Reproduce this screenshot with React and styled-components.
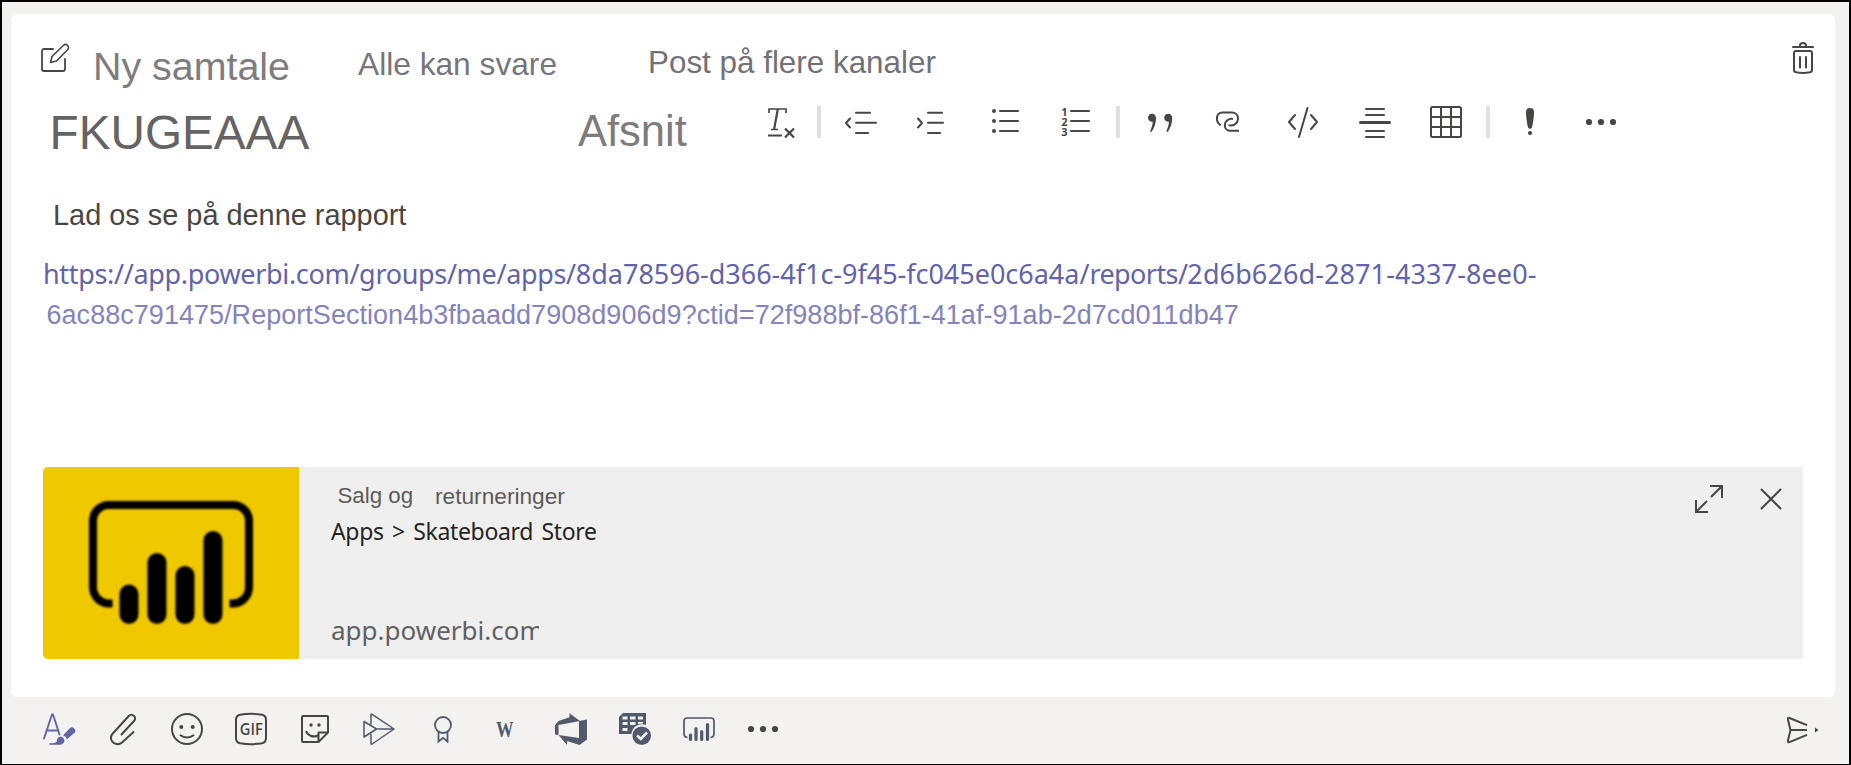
import React from "react";
import styled, { createGlobalStyle } from "styled-components";

const Global = createGlobalStyle`
  * { box-sizing: border-box; }
  body { margin: 0; background: #f3f2f1; font-family: "Liberation Sans", Arial, sans-serif; }
`;

const Frame = styled.div`
  width: 1851px;
  height: 765px;
  border: 2px solid #000;
  border-bottom-width: 1px;
  background: #f3f2f1;
  padding: 12px 14px 0 9px;
  overflow: hidden;
`;

const Composer = styled.section`
  height: 683px;
  background: #fff;
  border-radius: 6px;
  padding: 0 32px;
`;

const Row = styled.div`
  display: flex;
  align-items: flex-start;
  height: ${(p) => p.$height}px;
`;

const Label = styled.span`
  flex: none;
  white-space: pre;
  font-weight: 400;
  font-size: ${(p) => p.$size}px;
  line-height: ${(p) => p.$line}px;
  color: ${(p) => p.$color};
  margin: ${(p) => p.$top || 0}px 0 0 ${(p) => p.$left || 0}px;
  width: ${(p) => (p.$width ? `${p.$width}px` : "auto")};
`;

const Slot = styled.span`
  flex: none;
  display: block;
  width: 32px;
  height: 32px;
  margin: ${(p) => p.$top || 0}px 0 0 ${(p) => p.$gap || 0}px;
  color: ${(p) => p.$color || "#484644"};
  svg { display: block; overflow: visible; }
`;

const Divider = styled.span`
  flex: none;
  width: 4px;
  height: 32px;
  margin-left: ${(p) => p.$gap}px;
  background: #e1dfdd;
`;

const Trailing = styled.div`
  margin: 28px -16px 0 auto;
`;

const Toolbar = styled.div`
  display: flex;
  margin: 12px 0 0 78px;
`;

const Message = styled.div`
  height: 301px;
  padding-top: 32px;
`;

const Line = styled.p`
  margin: 0 0 0 10px;
  font-size: 28.9px;
  line-height: 34px;
  color: #484644;
  white-space: nowrap;
`;

const LinkLine = styled.a`
  display: block;
  height: 42px;
  margin: ${(p) => p.$top || 0}px 0 0 ${(p) => p.$left || 0}px;
  line-height: 41px;
  font-family: ${(p) => p.$font};
  font-size: 27px;
  letter-spacing: ${(p) => p.$track || 0}px;
  color: ${(p) => p.$color};
  white-space: nowrap;
`;

const Part = styled.span`
  letter-spacing: ${(p) => p.$track}px;
`;

const Preview = styled.article`
  display: flex;
  height: 192px;
  background: #efefef;
  border-radius: 5px 0 0 5px;
  overflow: hidden;
`;

const Thumb = styled.div`
  flex: none;
  width: 256px;
  background: #f0c800;
  svg { display: block; }
`;

const Details = styled.div`
  flex: 1;
  padding: 15px 0 0 32px;
`;

const TitleRow = styled.div`
  display: flex;
  height: 32px;
`;

const Crumb = styled.div`
  height: 34px;
  font-family: "Noto Sans", sans-serif;
  font-size: 23px;
  line-height: 34px;
  letter-spacing: -0.35px;
  word-spacing: 2.8px;
  color: #252423;
  white-space: nowrap;
`;

const Host = styled.div`
  height: 34px;
  margin-top: 65px;
  width: 207.5px;
  font-family: "Noto Sans", sans-serif;
  font-size: 26px;
  line-height: 34px;
  color: #616161;
  white-space: nowrap;
  overflow: hidden;
`;

const CardActions = styled.div`
  display: flex;
  padding: 16px 16px 0 0;
`;

const Footer = styled.footer`
  display: flex;
  gap: 32px;
  padding: 16px 0 0 32px;
`;

const Send = styled.div`
  margin: 0 16px 0 auto;
`;

function Icon({ children, sw = 2, top, gap, color }) {
  return (
    <Slot $top={top} $gap={gap} $color={color}>
      <svg width="32" height="32" viewBox="0 0 32 32" fill="none" stroke="currentColor" strokeWidth={sw} strokeLinecap="round" strokeLinejoin="round">
        {children}
      </svg>
    </Slot>
  );
}

const Dots = ({ gap }) => (
  <Icon gap={gap}>
    <g fill="currentColor" stroke="none">
      <circle cx="4" cy="16" r="3.1" />
      <circle cx="16" cy="16" r="3.1" />
      <circle cx="28" cy="16" r="3.1" />
    </g>
  </Icon>
);

const slate = "#505a6b";

function FormatBar() {
  return (
    <Toolbar>
      <Icon>
        <path d="M4 7V3h17v4M6 23.500h7" strokeWidth="1.7" strokeLinecap="butt" strokeLinejoin="miter" />
        <path d="M12.800 3L9.200 23" strokeWidth="2.200" strokeLinecap="butt" />
        <path d="M3 29.500h14" strokeLinecap="butt" />
        <path d="M20 22.500l9 9M29 22.500l-9 9" strokeLinecap="butt" strokeWidth="2.200" />
      </Icon>
      <Divider $gap={20} />
      <Icon gap={24}>
        <path d="M5 12.500L1 17l4 4.500M11 6.800h14M11 16.800h20M11 27h12" />
      </Icon>
      <Icon gap={38}>
        <path d="M3 12.500l4 4.500-4 4.500M13 6.800h14M13 16.800h15M13 27h12" />
      </Icon>
      <Icon gap={43}>
        <g fill="currentColor" stroke="none">
          <circle cx="4" cy="5" r="2" />
          <circle cx="4" cy="15" r="2" />
          <circle cx="4" cy="25" r="2" />
        </g>
        <path d="M10 5h18M10 15h18M10 25h18" />
      </Icon>
      <Icon gap={38}>
        <path d="M11 5h18M11 15h18M11 25h18" />
        <g fill="currentColor" stroke="none" fontFamily="Open Sans, sans-serif" fontWeight="700" fontSize="11">
          <text x="1.300" y="10">1</text>
          <text x="1.300" y="20">2</text>
          <text x="1.300" y="30">3</text>
        </g>
      </Icon>
      <Divider $gap={24} />
      <Icon gap={24}>
        <g fill="currentColor" stroke="none">
          <path d="M12 12c0 5-1.600 10-4.500 14l-1.500-.7c1.700-3.400 2.700-6.800 2.700-9.600A4 4 0 1 1 12 12z" />
          <path d="M28.200 12c0 5-1.600 10-4.500 14l-1.500-.7c1.700-3.400 2.700-6.800 2.700-9.600A4 4 0 1 1 28.200 12z" />
        </g>
      </Icon>
      <Icon gap={35}>
        <path d="M9.700 19.300C7 17.500 5.900 15 5.900 12.500 5.900 9 8 6.500 11.500 6.500h9.500c3.500 0 6 2.500 6 6 0 4-3 7-7 7-1.200 0-1.800-.3-1.800-1M22 12.900c-4.500-.5-8.200 2.300-8.200 6.300 0 3 2 5.500 5.200 5.500h9" strokeLinecap="butt" />
      </Icon>
      <Icon gap={44}>
        <path d="M8 9L2 16l6 7M24 9l6 7-6 7M20.500 2l-8.500 29" />
      </Icon>
      <Icon gap={40}>
        <path d="M7 3h18M7 9h18M7 25h18M7 31h18" />
        <path d="M1.500 16.500h29" strokeWidth="3" />
      </Icon>
      <Icon gap={39}>
        <rect x="1" y="1" width="30" height="30" rx="1.500" />
        <path d="M11 1v30M21 1v30M1 11h30M1 21h30" />
      </Icon>
      <Divider $gap={24} />
      <Icon gap={24}>
        <path d="M12 6a4 4 0 0 1 8 0c0 5-.8 10-1.800 14.500a2.200 2.200 0 0 1-4.400 0C12.800 16 12 11 12 6z" fill="currentColor" stroke="none" />
        <circle cx="16" cy="27" r="2.100" fill="currentColor" stroke="none" />
      </Icon>
      <Dots gap={39} />
    </Toolbar>
  );
}

function PowerBiLogo() {
  return (
    <svg width="256" height="192" viewBox="0 0 256 192" fill="none" stroke="#000">
      <defs>
        <filter id="soft" filterUnits="userSpaceOnUse" x="0" y="0" width="256" height="192">
          <feGaussianBlur stdDeviation="1" />
        </filter>
      </defs>
      <g filter="url(#soft)">
        <path d="M69.500 136.500H66C57 136.500 50 129 50 120V54c0-9 7-16 16-16h124c9 0 16 7 16 16v66c0 9-7 16.500-16 16.500h-3.500" strokeWidth="8" />
        <path d="M86 127v20.500M114 95.500v52M142 108.500v39M170 73.500v74" strokeWidth="19" strokeLinecap="round" />
      </g>
    </svg>
  );
}

export default function App() {
  return (
    <Frame>
      <Global />
      <Composer>
        <Row $height={80}>
          <Icon top={29} gap={-3} sw={1.8}>
            <path d="M13 6H4a2 2 0 0 0-2 2v18a2 2 0 0 0 2 2h19a2 2 0 0 0 2-2V16" />
            <path d="M10.500 19.500l1.500-6L23.300 2.500a3 3 0 0 1 4.300 4.300L16.500 18z" strokeWidth="1.600" />
          </Icon>
          <Label as="h1" $size={39.4} $line={40} $color="#7f7c7d" $top={32} $left={21} $width={265}>Ny samtale</Label>
          <Label $size={31.7} $line={40} $color="#77757c" $top={30} $width={290}>Alle kan svare</Label>
          <Label $size={31.4} $line={40} $color="#737177" $top={29}>Post på flere kanaler</Label>
          <Trailing>
            <Icon>
              <path d="M6 5h20M13 5V3.500C13 2 14 1 16 1s3 1 3 2.500V5" />
              <path d="M7 11c0-1.500.7-2 2-2h14c1.300 0 2 .5 2 2v17c0 1.500-.7 2-2 2.300-4.500.9-9.500.9-14 0-1.300-.3-2-.8-2-2.300z" />
              <path d="M13 15v10.500M19 15v10.500" />
            </Icon>
          </Trailing>
        </Row>
        <Row $height={72}>
          <Label $size={47.7} $line={48} $color="#656363" $top={15} $left={6.5} $width={528.5}>FKUGEAAA</Label>
          <Label $size={43.5} $line={48} $color="#7f7b7c" $top={13} $width={109}>Afsnit</Label>
          <FormatBar />
        </Row>
        <Message>
          <Line>Lad os se på denne rapport</Line>
          <LinkLine $top={21} $font={'"Noto Sans", sans-serif'} $color="#6264a7">
            <Part $track={-0.33}>https://app.powerbi.com/groups/me/apps/</Part>
            <Part $track={-0.02}>8da78596-d366-4f1c-9f45-fc045e0c6a4a/</Part>
            <Part $track={-0.59}>reports/</Part>
            <Part $track={0.1}>2d6b626d-2871-4337-8ee0-</Part>
          </LinkLine>
          <LinkLine $left={3.5} $font={'"Liberation Sans", Arial, sans-serif'} $track={0.035} $color="#8583bb">
            6ac88c791475/ReportSection4b3fbaadd7908d906d9?ctid=72f988bf-86f1-41af-91ab-2d7cd011db47
          </LinkLine>
        </Message>
        <Preview>
          <Thumb>
            <PowerBiLogo />
          </Thumb>
          <Details>
            <TitleRow>
              <Label $size={22.3} $line={28} $color="#5c5a5a" $left={6.5} $width={97.5}>Salg og</Label>
              <Label $size={22.7} $line={28} $color="#5c5a5a">returneringer</Label>
            </TitleRow>
            <Crumb>Apps &gt; Skateboard Store</Crumb>
            <Host>app.powerbi.com</Host>
          </Details>
          <CardActions>
            <Icon>
              <path d="M17 3h12v12M29 3L18 14M3 17v12h12M3 29L14 18" strokeLinecap="butt" strokeLinejoin="miter" />
            </Icon>
            <Icon gap={30}>
              <path d="M6.500 6.500l19 19M25.500 6.500l-19 19" />
            </Icon>
          </CardActions>
        </Preview>
      </Composer>
      <Footer>
        <Icon color="#6264a7">
          <path d="M1 25.500L9 1.500h1l6.500 20M3.500 17.500h10.500" strokeWidth="1.900" />
          <g fill="currentColor" stroke="none">
            <path d="M6.500 30.300c4 0 6-.3 7.300-1.800-.3-3.500 2.500-5.500 5.200-4.500 3.200 1.300 3.200 6 0 7.200-1 .5-2 .6-3 .6H7c-1 0-1-1.500-.5-1.500z" />
            <path d="M20 22.500l6.500-7a3.300 3.300 0 0 1 4.800 4.600l-7.300 6.200c-.6-2-2-3.400-4-3.800z" />
          </g>
        </Icon>
        <Icon>
          <path d="M26.500 19L15 29.500c-3.500 2.800-8 1.800-10-1.300-1.700-2.700-1.200-5.700 1-8L21.500 3.300c1.700-1.800 4-1.800 5.500-.4s1.400 3.600 0 5.100L14.500 21.500" />
        </Icon>
        <Icon>
          <circle cx="16" cy="16" r="15" />
          <circle cx="10.300" cy="14" r="2" fill="currentColor" stroke="none" />
          <circle cx="21.700" cy="14" r="2" fill="currentColor" stroke="none" />
          <path d="M9.500 22.300c3.500 2.900 9.500 2.900 13 0" />
        </Icon>
        <Icon>
          <path d="M1 7c0-3.500 1.500-4.700 4-5.200 6.500-1.100 15.500-1.100 22 0 2.500.5 4 1.700 4 5.200v18c0 3.500-1.500 4.700-4 5.200-6.500 1.100-15.500 1.100-22 0-2.500-.5-4-1.700-4-5.200z" />
          <text x="4.800" y="22" fill="currentColor" stroke="none" fontFamily="Open Sans, sans-serif" fontWeight="600" fontSize="16.500" textLength="23" lengthAdjust="spacingAndGlyphs">GIF</text>
        </Icon>
        <Icon>
          <path d="M4 3h24a1 1 0 0 1 1 1v15.500L19.500 29H4a1 1 0 0 1-1-1V4a1 1 0 0 1 1-1zM29 19.500h-9.500V29" />
          <path d="M7.500 19c2 3.800 6.500 5 10.500 3.800" strokeWidth="2.400" />
          <circle cx="12" cy="12" r="1.700" fill="currentColor" stroke="none" />
          <circle cx="20" cy="12" r="1.700" fill="currentColor" stroke="none" />
        </Icon>
        <Icon color={slate} sw={1.5}>
          <path d="M8 11V2c0-.8.500-1.200 1.200-.7L31 16 9.200 31c-.7.500-1.200 0-1.200-.7V21.500M1 8.500v15.500l12.500-8zM13.500 16H31" />
        </Icon>
        <Icon color={slate} sw={1.8}>
          <circle cx="16" cy="12" r="8" />
          <path d="M11.500 19v9.500l4.500-3.700 4.500 3.700V19" strokeLinejoin="miter" />
        </Icon>
        <Icon color={slate}>
          <text x="5" y="23.500" fill="currentColor" stroke="none" fontFamily="Liberation Serif, serif" fontWeight="700" fontSize="24" textLength="17.500" lengthAdjust="spacingAndGlyphs">W</text>
        </Icon>
        <Icon color={slate}>
          <path d="M0 12L3.500 8l11-3.800V.3l10.500 7.700L3.500 12v10L24 25V8l8-1.500v20L24.500 32l-12.500-4v4L3.500 22 0 21.500z" fill="currentColor" stroke="none" />
        </Icon>
        <Icon color={slate}>
          <path fillRule="evenodd" d="M4 0h23v12a10.500 10.500 0 0 0-14.500 9H0V4zM3.500 3.500v3h5v-3zM11 3.500v3h5.500v-3zM19 3.500v3h5v-3zM3.500 9v3h5V9zM11 9v3h5.500V9zM19 9v2l5-.5V9zM3.500 15v3h5v-3z" fill="currentColor" stroke="none" />
          <circle cx="22.700" cy="22.700" r="9.300" fill="currentColor" stroke="none" />
          <path d="M18 22.500l3.800 3.500 6.200-6.500" stroke="#f3f2f1" strokeWidth="2.600" strokeLinecap="butt" strokeLinejoin="miter" />
        </Icon>
        <Icon color={slate}>
          <path d="M3.800 24.300C2 24 1 23 1 21V8c0-2 1-3 3-3h24c2 0 3 1 3 3v13c0 2-1 3-2.800 3.300" strokeWidth="1.700" />
          <path d="M7.500 22v4.500M13 15.500v11M18.700 18.500v8M24.500 11.500v15" strokeWidth="3.200" />
        </Icon>
        <Dots />
        <Send>
          <Icon>
            <path d="M20 12.200L2.500 5C1 4.500.6 5.200.9 6.400L3.500 17 .9 27.800c-.3 1.200.2 1.800 1.600 1.300L20 21.800M3.500 17H20" strokeLinecap="butt" />
            <path d="M28 14.500l3.500 2.500-3.500 2.500z" fill="currentColor" stroke="none" />
          </Icon>
        </Send>
      </Footer>
    </Frame>
  );
}
